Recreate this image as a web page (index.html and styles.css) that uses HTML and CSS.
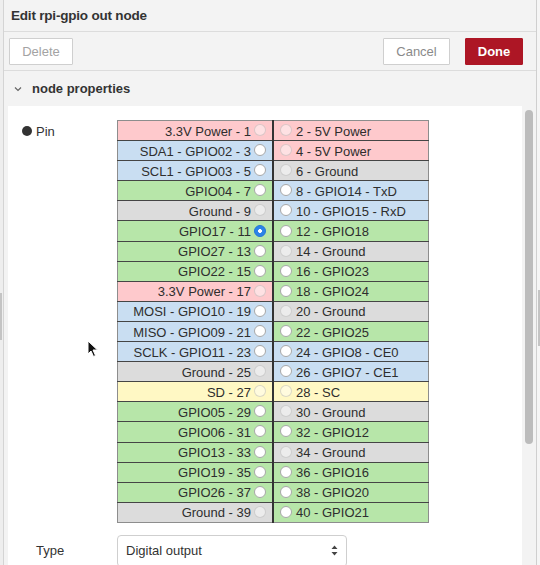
FILE: index.html
```html
<!DOCTYPE html>
<html>
<head>
<meta charset="utf-8">
<title>Edit rpi-gpio out node</title>
<link rel="stylesheet" href="styles.css">
</head>
<body>
<div class="edge-left"><span class="edge-handle"></span></div>
<div class="tray">
  <div class="tray-header">Edit rpi-gpio out node</div>
  <div class="tray-toolbar">
    <button class="btn btn-disabled">Delete</button>
    <div class="toolbar-right">
      <button class="btn btn-cancel">Cancel</button>
      <button class="btn btn-primary">Done</button>
    </div>
  </div>
  <div class="section-header"><span class="chevron"><svg width="8" height="6" viewBox="0 0 8 6"><path d="M1 1.5 L4 4.5 L7 1.5" fill="none" stroke="#666" stroke-width="1.2"/></svg></span>node properties</div>
  <div class="tray-body">
    <div class="form">
      <div class="form-row pin-row">
        <div class="form-label"><span class="dot"></span>Pin</div>
        <table class="pins">
          <tbody>
            <tr>
              <td class="l power"><span>3.3V Power - 1</span><input type="radio" name="pin" disabled></td>
              <td class="r power"><input type="radio" name="pin" disabled><span>2 - 5V Power</span></td>
            </tr>
            <tr>
              <td class="l spi"><span>SDA1 - GPIO02 - 3</span><input type="radio" name="pin"></td>
              <td class="r power"><input type="radio" name="pin" disabled><span>4 - 5V Power</span></td>
            </tr>
            <tr>
              <td class="l spi"><span>SCL1 - GPIO03 - 5</span><input type="radio" name="pin"></td>
              <td class="r ground"><input type="radio" name="pin" disabled><span>6 - Ground</span></td>
            </tr>
            <tr>
              <td class="l gpio"><span>GPIO04 - 7</span><input type="radio" name="pin"></td>
              <td class="r spi"><input type="radio" name="pin"><span>8 - GPIO14 - TxD</span></td>
            </tr>
            <tr>
              <td class="l ground"><span>Ground - 9</span><input type="radio" name="pin" disabled></td>
              <td class="r spi"><input type="radio" name="pin"><span>10 - GPIO15 - RxD</span></td>
            </tr>
            <tr>
              <td class="l gpio"><span>GPIO17 - 11</span><input type="radio" name="pin" checked></td>
              <td class="r gpio"><input type="radio" name="pin"><span>12 - GPIO18</span></td>
            </tr>
            <tr>
              <td class="l gpio"><span>GPIO27 - 13</span><input type="radio" name="pin"></td>
              <td class="r ground"><input type="radio" name="pin" disabled><span>14 - Ground</span></td>
            </tr>
            <tr>
              <td class="l gpio"><span>GPIO22 - 15</span><input type="radio" name="pin"></td>
              <td class="r gpio"><input type="radio" name="pin"><span>16 - GPIO23</span></td>
            </tr>
            <tr>
              <td class="l power"><span>3.3V Power - 17</span><input type="radio" name="pin" disabled></td>
              <td class="r gpio"><input type="radio" name="pin"><span>18 - GPIO24</span></td>
            </tr>
            <tr>
              <td class="l spi"><span>MOSI - GPIO10 - 19</span><input type="radio" name="pin"></td>
              <td class="r ground"><input type="radio" name="pin" disabled><span>20 - Ground</span></td>
            </tr>
            <tr>
              <td class="l spi"><span>MISO - GPIO09 - 21</span><input type="radio" name="pin"></td>
              <td class="r gpio"><input type="radio" name="pin"><span>22 - GPIO25</span></td>
            </tr>
            <tr>
              <td class="l spi"><span>SCLK - GPIO11 - 23</span><input type="radio" name="pin"></td>
              <td class="r spi"><input type="radio" name="pin"><span>24 - GPIO8 - CE0</span></td>
            </tr>
            <tr>
              <td class="l ground"><span>Ground - 25</span><input type="radio" name="pin" disabled></td>
              <td class="r spi"><input type="radio" name="pin"><span>26 - GPIO7 - CE1</span></td>
            </tr>
            <tr>
              <td class="l eeprom"><span>SD - 27</span><input type="radio" name="pin" disabled></td>
              <td class="r eeprom"><input type="radio" name="pin" disabled><span>28 - SC</span></td>
            </tr>
            <tr>
              <td class="l gpio"><span>GPIO05 - 29</span><input type="radio" name="pin"></td>
              <td class="r ground"><input type="radio" name="pin" disabled><span>30 - Ground</span></td>
            </tr>
            <tr>
              <td class="l gpio"><span>GPIO06 - 31</span><input type="radio" name="pin"></td>
              <td class="r gpio"><input type="radio" name="pin"><span>32 - GPIO12</span></td>
            </tr>
            <tr>
              <td class="l gpio"><span>GPIO13 - 33</span><input type="radio" name="pin"></td>
              <td class="r ground"><input type="radio" name="pin" disabled><span>34 - Ground</span></td>
            </tr>
            <tr>
              <td class="l gpio"><span>GPIO19 - 35</span><input type="radio" name="pin"></td>
              <td class="r gpio"><input type="radio" name="pin"><span>36 - GPIO16</span></td>
            </tr>
            <tr>
              <td class="l gpio"><span>GPIO26 - 37</span><input type="radio" name="pin"></td>
              <td class="r gpio"><input type="radio" name="pin"><span>38 - GPIO20</span></td>
            </tr>
            <tr>
              <td class="l ground"><span>Ground - 39</span><input type="radio" name="pin" disabled></td>
              <td class="r gpio"><input type="radio" name="pin"><span>40 - GPIO21</span></td>
            </tr>
          </tbody>
        </table>
      </div>
      <div class="form-row type-row">
        <div class="form-label type-label">Type</div>
        <div class="select">
          <span>Digital output</span>
          <svg class="select-arrows" width="7" height="11" viewBox="0 0 7 11"><path d="M3.5 0.5 L6.5 4 L0.5 4 Z M0.5 7 L6.5 7 L3.5 10.5 Z" fill="#444"/></svg>
        </div>
      </div>
    </div>
    <div class="scrollbar"><div class="thumb"></div></div>
    <svg class="cursor" width="12" height="18" viewBox="0 0 12 18"><path d="M1 1 L1 14 L4 11 L6.5 16.5 L8.5 15.5 L6 10 L10.5 10 Z" fill="#111" stroke="#fff" stroke-width="1"/></svg>
  </div>
</div>
<div class="edge-right"><span class="edge-handle"></span></div>
</body>
</html>
```

FILE: styles.css
```css
html, body {
  margin: 0;
  padding: 0;
  height: 565px;
  overflow: hidden;
}
body {
  display: flex;
  background: #f7f7f7;
  font-family: "Liberation Sans", Arial, Helvetica, sans-serif;
  color: #333;
}
.edge-left {
  width: 3px;
  position: relative;
  background: #eeeeee;
  border-right: 1px solid #d4d4d4;
}
.edge-right {
  width: 3px;
  position: relative;
  background: #f5f5f5;
  border-left: 1px solid #cfcfcf;
}
.edge-handle {
  position: absolute;
  left: 0;
  width: 2px;
  background: #c4c4c4;
}
.edge-left .edge-handle {
  top: 293px;
  height: 47px;
}
.edge-right .edge-handle {
  top: 290px;
  height: 56px;
  left: 1px;
}
.tray {
  flex: 1;
  display: flex;
  flex-direction: column;
  background: #f3f3f3;
  min-width: 0;
  overflow: hidden;
}
.tray-header {
  flex-shrink: 0;
  height: 31px;
  line-height: 31px;
  padding-left: 7px;
  font-size: 13.5px;
  font-weight: bold;
  color: #333;
  border-bottom: 1px solid #dcdcdc;
  letter-spacing: -0.2px;
}
.tray-toolbar {
  flex-shrink: 0;
  height: 38px;
  display: flex;
  align-items: center;
  justify-content: space-between;
  padding: 0 13px 0 5px;
  border-bottom: 1px solid #dcdcdc;
}
.toolbar-right {
  display: flex;
  gap: 15px;
}
.btn {
  font-family: "Liberation Sans", Arial, sans-serif;
  font-size: 13px;
  height: 27px;
  border: 1px solid #cfcfcf;
  background: #fff;
  color: #999;
  padding: 0;
  border-radius: 1px;
}
.btn-disabled {
  width: 64px;
  color: #a3a3a3;
}
.btn-cancel {
  width: 67px;
  color: #8a8a8a;
}
.btn-primary {
  width: 58px;
  background: #ad1625;
  border-color: #ad1625;
  color: #fff;
  font-weight: bold;
}
.section-header {
  flex-shrink: 0;
  height: 35px;
  display: flex;
  align-items: center;
  font-size: 13px;
  font-weight: bold;
  color: #333;
  padding-left: 10px;
}
.chevron {
  width: 18px;
  display: inline-flex;
  align-items: center;
}
.tray-body {
  flex: 1;
  min-height: 0;
  position: relative;
  display: flex;
  padding-left: 4px;
}
.form {
  flex: 1;
  background: #fff;
  padding-top: 14px;
}
.form-row {
  display: flex;
}
.form-label {
  width: 109px;
  display: flex;
  align-items: center;
  gap: 4px;
  padding-left: 14px;
  box-sizing: border-box;
  font-size: 13px;
  color: #333;
  height: 22px;
}
.dot {
  width: 10px;
  height: 10px;
  border-radius: 50%;
  background: #333;
}
.pins {
  border-collapse: collapse;
  table-layout: fixed;
  width: 312px;
  font-size: 13px;
  color: #2e2e2e;
  border: 1px solid #8d8d8d;
}
.pins td {
  height: 19.1px;
  padding: 0;
  border-top: 1px solid #454545;
  border-bottom: 1px solid #454545;
  white-space: nowrap;
  vertical-align: middle;
}
.pins tr:first-child td {
  border-top-color: #8d8d8d;
}
.pins tr:last-child td {
  border-bottom-color: #8d8d8d;
}
.pins td.l {
  text-align: right;
  padding-right: 6px;
  border-right: 2px solid #333;
}
.pins td.r {
  text-align: left;
  padding-left: 6px;
}
.pins td span {
  vertical-align: middle;
}
.pins td.l span {
  margin-right: 3px;
}
.pins td.r span {
  margin-left: 4px;
}
.power { background: #fec9cc; }
.spi { background: #c9def2; }
.ground { background: #dcdcdc; }
.gpio { background: #b7e6a9; }
.eeprom { background: #fff8c4; }
.pins input[type="radio"] {
  -webkit-appearance: none;
  appearance: none;
  width: 12px;
  height: 12px;
  margin: 0;
  border-radius: 50%;
  background: #fff;
  border: 1px solid #a8a8a8;
  box-sizing: border-box;
  vertical-align: middle;
  position: relative;
  top: -1px;
}
.pins input[type="radio"]:disabled {
  background: rgba(255, 255, 255, 0.45);
  border-color: rgba(150, 150, 150, 0.35);
}
.pins input[type="radio"]:checked {
  background: radial-gradient(circle, #fff 0 1.6px, #2b83e8 2.2px);
  border-color: #2576d6;
}
.type-row {
  margin-top: 12px;
  align-items: center;
}
.type-label {
  padding-left: 28px;
  height: 30px;
}
.select {
  width: 230px;
  height: 32px;
  box-sizing: border-box;
  border: 1px solid #cfcfcf;
  border-radius: 4px;
  display: flex;
  align-items: center;
  justify-content: space-between;
  padding: 0 8px 0 8px;
  font-size: 13px;
  color: #333;
  background: #fff;
}
.scrollbar {
  width: 14px;
  background: #f3f3f3;
  padding: 4px 3px 0 3px;
  box-sizing: border-box;
}
.thumb {
  width: 8px;
  height: 334px;
  background: #bcbcbc;
  border-radius: 4px;
}
.cursor {
  position: absolute;
  left: 83px;
  top: 234px;
}
```
